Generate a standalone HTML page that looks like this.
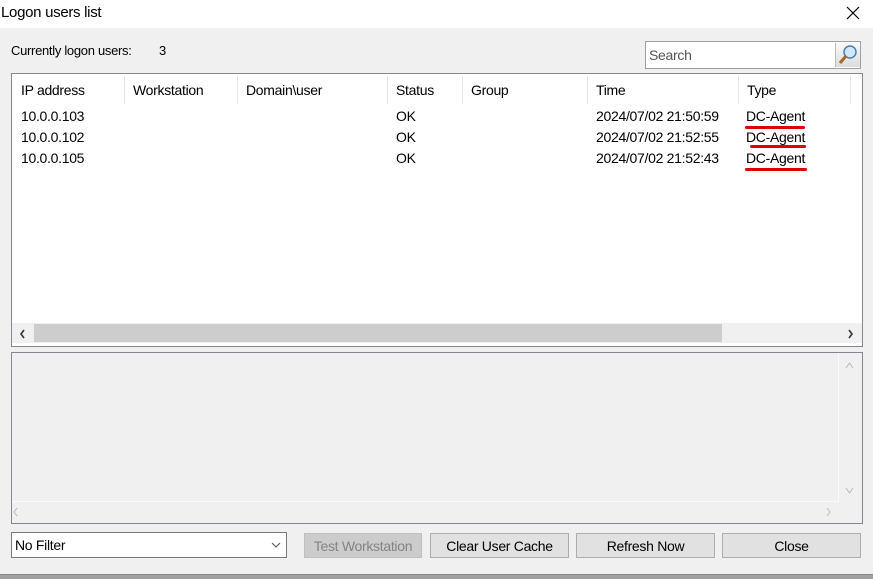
<!DOCTYPE html>
<html><head><style>
body{margin:0;width:873px;height:578px;background:#f0f0f0;font-family:"Liberation Sans",sans-serif;font-size:14px;color:#000;position:relative;overflow:hidden;letter-spacing:-0.3px}
.a{position:absolute}
.t{white-space:nowrap}
.btn{position:absolute;top:533px;height:25px;border:1px solid #adadad;background:#e1e1e1;text-align:center;line-height:25px;box-sizing:border-box}
.sep{position:absolute;top:76px;width:1px;height:28px;background:#e5e5e5}
.red{position:absolute;height:3px;background:#e00000;border-radius:2px}
</style></head><body>
<div class="a" style="left:0;top:0;width:873px;height:28px;background:#fff"></div>
<div class="a t" style="left:1px;top:4px;font-size:15px">Logon users list</div>
<svg class="a" style="left:846px;top:6px" width="14" height="14"><path d="M1 1L13 13M13 1L1 13" stroke="#000" stroke-width="1.2"/></svg>

<div class="a t" style="left:11px;top:43px;font-size:13px">Currently logon users:</div>
<div class="a t" style="left:159px;top:43px;font-size:13px">3</div>

<div class="a" style="left:645px;top:41px;width:216px;height:28px;border:1px solid #a0a0a0;background:#fff;box-sizing:border-box"></div>
<div class="a t" style="left:649px;top:47px;color:#555">Search</div>
<div class="a" style="left:835px;top:43px;width:24px;height:24px;background:linear-gradient(#fafafa,#dcdcdc);border-left:1px solid #bbb"></div>
<svg class="a" style="left:836px;top:43px" width="24" height="24"><circle cx="14" cy="9" r="6" fill="#cfe8ff" stroke="#4a7fb5" stroke-width="1.5"/><path d="M10 13L4 20" stroke="#a0692a" stroke-width="3"/></svg>

<div class="a" style="left:11px;top:73px;width:852px;height:274px;border:1px solid #828790;background:#fff;box-sizing:border-box"></div>
<div class="sep" style="left:124px"></div><div class="sep" style="left:237px"></div><div class="sep" style="left:387px"></div><div class="sep" style="left:462px"></div><div class="sep" style="left:587px"></div><div class="sep" style="left:738px"></div><div class="sep" style="left:850px"></div>
<div class="a t" style="left:21px;top:82px">IP address</div>
<div class="a t" style="left:133px;top:82px">Workstation</div>
<div class="a t" style="left:246px;top:82px">Domain\user</div>
<div class="a t" style="left:396px;top:82px">Status</div>
<div class="a t" style="left:471px;top:82px">Group</div>
<div class="a t" style="left:596px;top:82px">Time</div>
<div class="a t" style="left:747px;top:82px">Type</div>

<div class="a t" style="left:21px;top:108px">10.0.0.103</div>
<div class="a t" style="left:396px;top:108px">OK</div>
<div class="a t" style="left:596px;top:108px">2024/07/02 21:50:59</div>
<div class="a t" style="left:746px;top:108px">DC-Agent</div>
<div class="a t" style="left:21px;top:129px">10.0.0.102</div>
<div class="a t" style="left:396px;top:129px">OK</div>
<div class="a t" style="left:596px;top:129px">2024/07/02 21:52:55</div>
<div class="a t" style="left:746px;top:129px">DC-Agent</div>
<div class="a t" style="left:21px;top:150px">10.0.0.105</div>
<div class="a t" style="left:396px;top:150px">OK</div>
<div class="a t" style="left:596px;top:150px">2024/07/02 21:52:43</div>
<div class="a t" style="left:746px;top:150px">DC-Agent</div>
<div class="red" style="left:745px;top:126px;width:60px"></div>
<div class="red" style="left:750px;top:145px;width:56px"></div>
<div class="red" style="left:745px;top:168px;width:62px"></div>

<div class="a" style="left:12px;top:323px;width:850px;height:20px;background:#f0f0f0"></div>
<div class="a" style="left:34px;top:324px;width:688px;height:18px;background:#cdcdcd"></div>
<svg class="a" style="left:19px;top:329px" width="7" height="10"><path d="M5 1L2 5L5 9" stroke="#333" stroke-width="1.6" fill="none"/></svg>
<svg class="a" style="left:847px;top:329px" width="7" height="10"><path d="M2 1L5 5L2 9" stroke="#333" stroke-width="1.6" fill="none"/></svg>

<div class="a" style="left:11px;top:352px;width:852px;height:172px;border:1px solid #828790;box-sizing:border-box"></div>
<div class="a" style="left:12px;top:353px;width:826px;height:148px;border-right:1px solid #fafafa;border-bottom:1px solid #fafafa"></div>
<svg class="a" style="left:845px;top:362px" width="9" height="7"><path d="M1 6L4.5 1L8 6" stroke="#bbb" fill="none"/></svg>
<svg class="a" style="left:845px;top:487px" width="9" height="7"><path d="M1 1L4.5 6L8 1" stroke="#bbb" fill="none"/></svg>
<svg class="a" style="left:12px;top:507px" width="7" height="10"><path d="M5 1L2 5L5 9" stroke="#bbb" fill="none"/></svg>
<svg class="a" style="left:825px;top:507px" width="7" height="10"><path d="M2 1L5 5L2 9" stroke="#bbb" fill="none"/></svg>

<div class="a" style="left:11px;top:532px;width:276px;height:26px;border:1px solid #7a7a7a;background:#fff;box-sizing:border-box"></div>
<div class="a t" style="left:15px;top:537px">No Filter</div>
<svg class="a" style="left:271px;top:542px" width="10" height="7"><path d="M1 1L5 5L9 1" stroke="#555" fill="none"/></svg>

<div class="btn" style="left:304px;width:118px;background:#cccccc;border-color:#bfbfbf;color:#838383">Test Workstation</div>
<div class="btn" style="left:430px;width:139px">Clear User Cache</div>
<div class="btn" style="left:576px;width:139px">Refresh Now</div>
<div class="btn" style="left:722px;width:139px">Close</div>

<div class="a" style="left:0;top:574px;width:873px;height:4px;background:#a0a0a0;border-top:1px solid #888"></div>
</body></html>
